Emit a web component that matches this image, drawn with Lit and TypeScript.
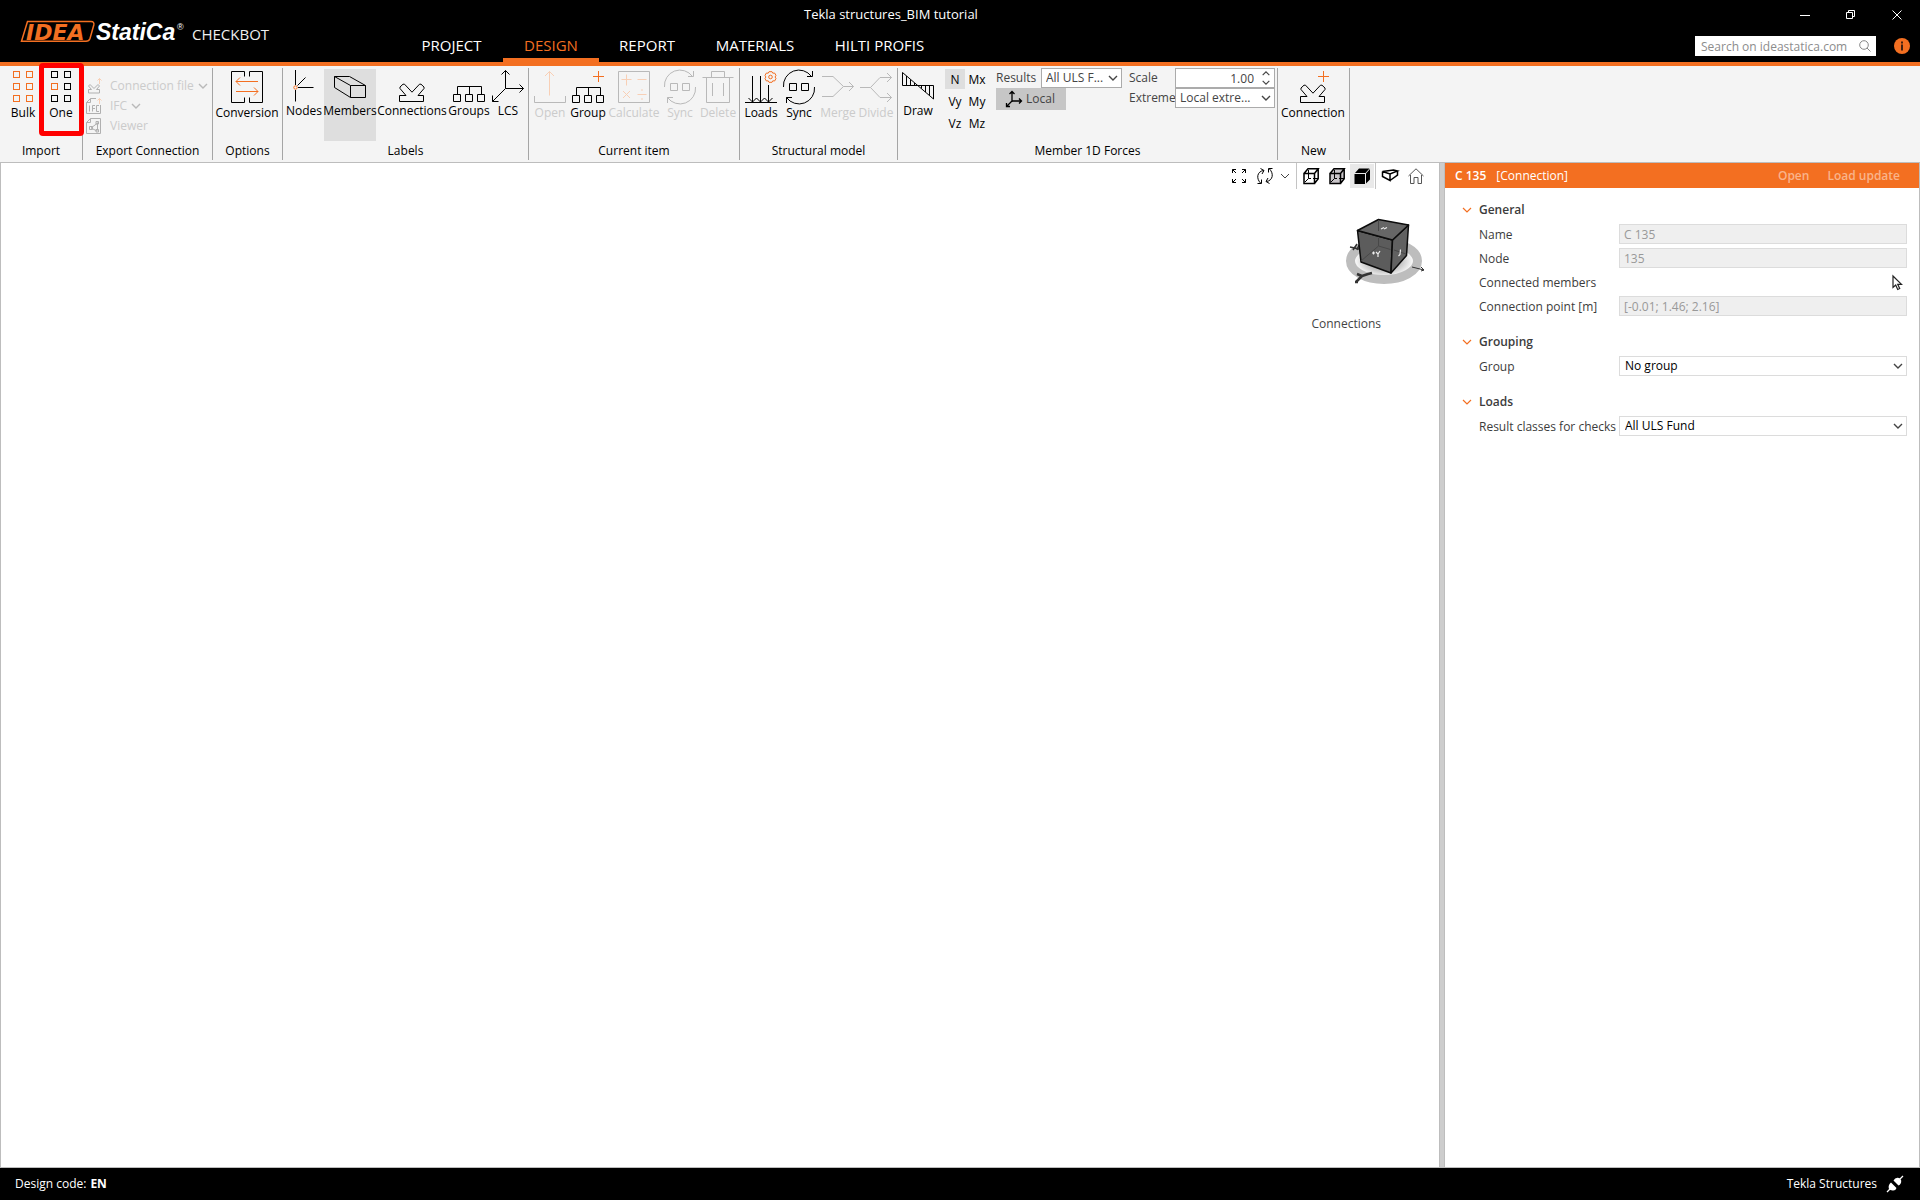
import { LitElement, html, svg, css, nothing, TemplateResult, SVGTemplateResult } from "lit";
import { customElement, state } from "lit/decorators.js";
import { classMap } from "lit/directives/class-map.js";

/* ---------- icons ---------- */

const sq = (x: number, y: number, size: number, cls = "") =>
  svg`<rect class=${cls} x=${x} y=${y} width=${size} height=${size} />`;

const squares = (accent: (i: number) => boolean) =>
  [0, 1, 2, 3, 4, 5].map((i) => sq(6.5 + (i % 2) * 13, 0.5 + Math.floor(i / 2) * 12, 6, accent(i) ? "accent" : ""));

const joint = svg`<path d="M3.500 25.500h6.500L4 18.500V17l3-2.800h1.500l7.500 8 7.500-8H25l3 2.800v1.500l-6 7h5.500v6h-24z" />`;
const tree = svg`<path d="M4.500 24.500v-8h24v8M16.500 16.500v8M.5 24.500h7v7h-7zM12.500 24.500h7v7h-7zM24.500 24.500h7v7h-7z" />`;
const syncArt = svg`
  <path d="M.5 16A15.500 15.500 0 0 1 28.500 5.500M31.500 16A15.500 15.500 0 0 1 3.500 26.500M29.500 0v5.500H24M3.500 32v-5.500H9" />
  <path d="M6.500 12.500h7v7h-7zM18.500 12.500h7v7h-7z" />`;

const ICONS: Record<string, SVGTemplateResult | SVGTemplateResult[]> = {
  bulk: squares(() => true),
  one: squares((i) => i === 2),
  conversion: svg`<path d="M13.500 5.500v-5H.5v31h13v-5M18.500 5.500v-5h13v31h-13v-5" />
    <path class="accent" d="M27 10.500H5M9 6.500l-4 4 4 4M5 20.500h22M23 16.500l4 4-4 4" />`,
  nodes: svg`<path d="M7.500 0v15M7.500 20v11.500M10 17.500h15.500M9.500 15.500l8-8" /><circle class="accent" cx="7.500" cy="17.500" r="1.700" />`,
  members: svg`<path d="M.5 6.500h15l16 9v12h-15L.5 17.500zM.5 6.500l16 9h15M16.500 15.500v12" />`,
  connections: joint,
  groups: tree,
  lcs: svg`<path d="M13.500 18.500V.5M9.500 4.500l4-4 4 4M13.500 18.500h18M27.500 14.500l4 4-4 4M13.500 18.500L.5 31.500M.5 25.500v6h6" />`,
  open: svg`<path d="M.5 25v6.500h31V25" /><path class="accent" d="M15.500 24.500V.5M11 5L15.500.5 20 5" />`,
  group: svg`${tree}<path class="accent" d="M26.500 0v11M21 5.500h11" />`,
  calculate: svg`<path d="M.5.5h31v31H.5z" />
    <path class="accent" d="M8.500 3.500v11M3.500 8.500h10M19.500 8.500h9M5 20l7 7M12 20l-7 7M19.500 23.500h9M24 18v2M24 27v2" />`,
  sync: syncArt,
  delete: svg`<path d="M.5 6.500h31M9.500 6.500v-6h13v6M4.500 6.500v25h23v-25M10.500 12v13M21.500 12v13" />`,
  loads: svg`<path d="M0 31.500h32M7.500 5v26M15.500 5v26M23.500 14v17M3.500 27l4 4 4-4 4 4 4-4 4 4 4-4" />
    <circle class="accent" cx="25.500" cy="6" r="1.800" />
    <path class="accent" d="M24 .7h3l.8 1.500 1.800-.2 1.400 2.400-.9 1.600.9 1.600-1.400 2.400-1.800-.2-.8 1.500h-3l-.8-1.500-1.800.2L20 7.600l.9-1.600-.9-1.600L21.400 2l1.800.2z" />`,
  merge: svg`<path d="M0 5.500h11l10.500 10L11 25.500H0M21.500 15.500h10M27 11l4.500 4.500L27 20" />`,
  divide: svg`<path d="M0 16.500h10.500L20 6.500h11.500M10.500 16.500l9.500 10h11.500M27 2l4.500 4.500L27 11M27 22l4.500 4.500L27 31" />`,
  draw: svg`<path d="M.5 15.500V2.500l31 26.500V15.500zM4.500 6v9.500M8.500 9.500v6M12.500 13v2.500M19.500 15.500v3M23.500 15.500v6.500M27.500 15.500v10" />`,
  connection: svg`${joint}<path class="accent" d="M26.500 0v11M21 5.500h11" />`,
};

const icon = (name: string) => html`<svg class="icon" viewBox="0 0 32 32" aria-hidden="true">${ICONS[name]}</svg>`;

const chevron = (cls = "chev") =>
  html`<svg class=${cls} viewBox="0 0 10 6" aria-hidden="true"><path d="M1 1l4 4 4-4" /></svg>`;

const SMALL: Record<string, SVGTemplateResult> = {
  file: svg`<path d="M2.500 11.500h3l-3-3.500 1.500-1.500 4 4 4-4 1.500 1.500-3 3.500h3v3.500h-11z" /><path class="accent" d="M13.500 6V.5M11.500 2.500l2-2 2 2" />`,
  ifc: svg`<path d="M14.500 7v8.500H.5V4.500L4.500.5H10M.5 4.500h4v-4" /><path d="M3.500 7.500v6M6.500 13.500v-6H9M6.500 10.500H9M13 7.500h-2.500v6H13" /><path class="accent" d="M13.500 6V.5M11.500 2.500l2-2 2 2" />`,
  viewer: svg`<path d="M.5 4.500L4.500.5h10v15H.5zM.5 4.500h4v-4M11.500 4.500v8M5 10l6-4.500M5 10l6 3" /><path d="M3.500 8.500h3v3h-3zM10 3.500h2.500V6H10zM10 11.500h2.500V14H10z" />`,
};

const VIEW: Record<string, SVGTemplateResult> = {
  fit: svg`<path d="M1.500 5V1.500H5M1.500 1.500L5 5M11 1.500h3.500V5M14.500 1.500L11 5M1.500 11v3.500H5M1.500 14.500L5 11M11 14.500h3.500V11M14.500 14.500L11 11" />`,
  orbit: svg`<path d="M3.500 15C-1 10.500 0 3.500 6.500 2.500M3.500.5l3.500 2L5 6M.5 15.500h4v-4M12.500 1c4.500 4.500 3.500 11.500-3 12.500M12.500 15.500L9 13.500 11 10M15.500.5h-4v4" />`,
  wire: svg`<path class="heavy" d="M1 5.500h10.500v10H1zM1 5.500L5 .8h10.200L11.500 5.500M15.200.8v10l-3.700 4.700" /><path d="M5.500 2v8.500H8M10 10.500h5M5.500 10.500L2 14" />`,
  shaded: svg`<path class="shade" d="M1 5.500L5 .8h10.200v10l-3.700 4.700H1z" /><path class="heavy" d="M1 5.500h10.500v10H1zM1 5.500L5 .8h10.200L11.500 5.500M15.200.8v10l-3.700 4.700" /><path d="M5.500 2v8.500H8M10 10.500h5M5.500 10.500L2 14" />`,
  solid: svg`<path class="fill" d="M.5 6h10.500v10H.5zM1 5L5 .5h10.500L11.500 5zM12 5.500l4-4.500v10.500L12 15.500z" />`,
  beam: svg`<path class="heavy" d="M.5 3.500l11-1.500 4 1L8 6zM.5 3.500V8.500L8 12.500V6M15.500 3v4L8 12.500" />`,
  home: svg`<path class="thin" d="M.5 8L8 .8 15.500 8M2.500 7v8.500H6v-6h4v6h3.500V7" />`,
};

/* ---------- data ---------- */

interface Tool { id: string; label: string; disabled?: boolean; active?: boolean; marked?: boolean }
interface Group { id: string; caption: string; tight?: boolean; tools: Tool[] }

const GROUPS: Record<string, Group> = {
  import: { id: "import", caption: "Import", tools: [{ id: "bulk", label: "Bulk" }, { id: "one", label: "One", marked: true }] },
  options: { id: "options", caption: "Options", tools: [{ id: "conversion", label: "Conversion" }] },
  labels: {
    id: "labels", caption: "Labels", tight: true,
    tools: [
      { id: "nodes", label: "Nodes" },
      { id: "members", label: "Members", active: true },
      { id: "connections", label: "Connections" },
      { id: "groups", label: "Groups" },
      { id: "lcs", label: "LCS" },
    ],
  },
  current: {
    id: "current", caption: "Current item",
    tools: [
      { id: "open", label: "Open", disabled: true },
      { id: "group", label: "Group" },
      { id: "calculate", label: "Calculate", disabled: true },
      { id: "sync", label: "Sync", disabled: true },
      { id: "delete", label: "Delete", disabled: true },
    ],
  },
  structural: {
    id: "structural", caption: "Structural model",
    tools: [
      { id: "loads", label: "Loads" },
      { id: "sync", label: "Sync" },
      { id: "merge", label: "Merge", disabled: true },
      { id: "divide", label: "Divide", disabled: true },
    ],
  },
  create: { id: "create", caption: "New", tools: [{ id: "connection", label: "Connection" }] },
};

const TABS = ["PROJECT", "DESIGN", "REPORT", "MATERIALS", "HILTI PROFIS"];
const FORCES = ["N", "Mx", "Vy", "My", "Vz", "Mz"];

/* ---------- shared styles ---------- */

const base = css`
  * { box-sizing: border-box; }
  button, input, select { font: inherit; color: inherit; margin: 0; padding: 0; border: 0; border-radius: 0; background: none; outline: 0; }
  button { white-space: nowrap; }
  svg { display: block; fill: none; stroke: currentColor; flex: none; overflow: visible; }
  .accent { stroke: #f36f21; }
  .chev { width: 10px; height: 6px; stroke: #444; stroke-width: 1.400; }
  .drop { display: grid; align-items: center; }
  .drop select { grid-area: 1 / 1; appearance: none; width: 100%; height: 20px; border: 1px solid #ababab; background: #fff; padding: 0 14px 0 4px; }
  .drop .chev { grid-area: 1 / 1; justify-self: end; margin-right: 4px; pointer-events: none; }
`;

/* ---------- header ---------- */

@customElement("cb-header")
class CbHeader extends LitElement {
  static styles = [base, css`
    :host { display: grid; grid-template-columns: 400px 1fr auto; grid-template-rows: 30px 32px; background: #000; color: #fff; border-bottom: 4px solid #f36f21; }
    .brand { grid-row: 1 / 3; display: flex; padding: 18px 0 0 20px; gap: 7px; }
    .logo { width: 165px; height: 26px; }
    .idea { font: italic 700 22px "DejaVu Sans", sans-serif; fill: #f36f21; stroke: none; }
    .statica { font: italic 700 23px "Liberation Sans", sans-serif; fill: #fff; stroke: none; }
    .reg { font: 9px "Liberation Sans", sans-serif; fill: #fff; stroke: none; }
    .frame { stroke: #f36f21; stroke-width: 1.500; }
    .product { font-size: 15px; line-height: 20px; padding-top: 6px; color: #eee; }
    .title { font-size: 13px; line-height: 28px; padding-left: 404px; }
    .window { display: flex; justify-content: flex-end; align-items: center; gap: 36px; padding: 0 18px 0 0; }
    .window svg { width: 10px; height: 10px; }
    nav { display: grid; grid-template-columns: 103px 96px 96px 120px 129px; }
    .tab { font-size: 15px; line-height: 30px; text-align: center; height: 32px; color: #fff; text-decoration: none; white-space: nowrap; }
    .tab.on { color: #f36f21; border-bottom: 4px solid #f36f21; }
    .find { display: flex; align-items: flex-start; gap: 18px; padding: 6px 10px 0 0; }
    .search { display: flex; align-items: center; width: 181px; height: 20px; background: #fff; color: #888; padding: 0 5px 0 6px; }
    .search input { flex: 1; min-width: 0; height: 20px; }
    .search input::placeholder { color: #8c8c8c; opacity: 1; }
    .search svg { width: 12px; height: 12px; }
    .info { width: 16px; height: 16px; margin-top: 2px; }
    .disc { fill: #f36f21; stroke: none; }
    .mark { stroke: #402010; stroke-width: 2; }
  `];

  @state() tab = "DESIGN";

  render() {
    return html`
      <div class="brand">
        <svg class="logo" viewBox="0 0 165 26" role="img" aria-label="IDEA StatiCa">
          <path class="frame" d="M7.500 3.500H71Q74.500 3.500 73.800 7L70 20.500Q69 23.200 66 23.200H1.500z" />
          <text class="idea" x="6" y="21.500">IDEA</text>
          <text class="statica" x="76" y="22">StatiCa</text>
          <text class="reg" x="157" y="12">®</text>
        </svg>
        <span class="product">CHECKBOT</span>
      </div>
      <div class="title">Tekla structures_BIM tutorial</div>
      <div class="window">
        <button aria-label="Minimize"><svg viewBox="0 0 10 10"><path d="M0 5.500h10" /></svg></button>
        <button aria-label="Restore"><svg viewBox="0 0 10 10"><path d="M.5 2.500h6v6h-6zM2.500 2.500v-2h6v6h-2" /></svg></button>
        <button aria-label="Close"><svg viewBox="0 0 10 10"><path d="M.5.5l9 9M9.500.5l-9 9" /></svg></button>
      </div>
      <nav>
        ${TABS.map((t) => html`<a href="#" class=${classMap({ tab: true, on: t === this.tab })}
          @click=${(e: Event) => { e.preventDefault(); this.tab = t; }}>${t}</a>`)}
      </nav>
      <div class="find">
        <label class="search">
          <input type="text" aria-label="Search" placeholder="Search on ideastatica.com" />
          <svg viewBox="0 0 12 12"><circle cx="5" cy="5" r="4.300" /><path d="M8 8l3.500 3.500" /></svg>
        </label>
        <button aria-label="Information"><svg class="info" viewBox="0 0 16 16"><circle class="disc" cx="8" cy="8" r="8" /><path class="mark" d="M8 3.500v2M8 6.500v6" /></svg></button>
      </div>`;
  }
}

/* ---------- ribbon ---------- */

@customElement("cb-ribbon")
class CbRibbon extends LitElement {
  static styles = [base, css`
    :host { display: flex; background: #f4f4f4; padding: 2px 0; border-bottom: 1px solid #bdbdbd; color: #000; }
    .group { display: flex; flex-direction: column; border-right: 1px solid #a5a5a5; flex: none; }
    .tools { display: grid; height: 74px; align-items: start; }
    .caption { text-align: center; line-height: 18px; }
    .import .tools { grid-template-columns: 38px 38px; padding: 0 2px 0 4px; }
    .options .tools { grid-template-columns: 68px; padding-right: 1px; }
    .labels .tools { grid-template-columns: 40px 52px 72px 42px 36px; padding: 0 2px 0 1px; }
    .current .tools { grid-template-columns: 36px 40px 52px 40px 36px; padding: 0 3px; }
    .structural .tools { grid-template-columns: 36px 40px 38px 38px; padding: 0 2px 0 3px; }
    .create .tools { grid-template-columns: 70px; padding-right: 1px; }
    .tool { position: relative; display: flex; flex-direction: column; align-items: center; gap: 2px; height: 72px; margin-top: 1px; padding-top: 2px; line-height: 16px; }
    .tight .tool { padding-top: 1px; gap: 1px; }
    .tool .text { display: flex; justify-content: center; width: 0; }
    .tool.on { background: #dedede; }
    .tool:disabled { color: #b9b9b9; }
    .tool:disabled .text { color: #cbcbcb; }
    .tool:disabled .accent { stroke: #f8cfb5; }
    .icon { width: 32px; height: 32px; }
    .marker { position: absolute; inset: -6px -4px -2px -3px; height: 73px; border: 5px solid #f00; border-radius: 4px; pointer-events: none; z-index: 2; }
    .export .tools { grid-template-rows: 20px 20px 20px; padding: 8px 7px 0 3px; }
    .line { display: flex; align-items: center; gap: 8px; height: 20px; color: #cbcbcb; width: 119px; }
    .line svg:not(.chev) { width: 16px; height: 16px; stroke: #b0b0b0; }
    .line svg .accent { stroke: #f8cfb5; }
    .line .chev { stroke: #b9b9b9; margin-left: -4px; }
    .forces .tools { display: flex; padding-right: 2px; }
    .draw { width: 40px; }
    .comp { display: grid; grid-template-columns: 20px 20px; grid-auto-rows: 20px; gap: 2px; padding: 1px 9px 0 7px; }
    .comp button { padding-top: 1px; }
    .comp button.on { background: #dedede; }
    .fields { display: grid; align-items: center; color: #444; grid-auto-rows: 20px; }
    .results { grid-template-columns: 45px 81px; margin-right: 7px; }
    .scale { grid-template-columns: 46px 100px; }
    .local { display: flex; align-items: center; gap: 4px; width: 70px; height: 22px; background: #c6c6c6; padding-left: 10px; }
    .local svg { width: 16px; height: 16px; color: #000; }
    .span { grid-column: 1 / 3; align-self: start; }
    .spin { display: flex; align-items: center; height: 20px; background: #fff; border: 1px solid #ababab; padding-right: 3px; }
    .spin input { flex: 1; min-width: 0; text-align: right; padding-right: 7px; height: 18px; }
    .steps { display: flex; flex-direction: column; gap: 4px; }
    .steps .chev, .steps button { display: block; width: 10px; height: 5px; }
    .up { transform: rotate(180deg); }
  `];

  @state() force = "N";

  private tool(t: Tool) {
    return html`<button class=${classMap({ tool: true, on: !!t.active })} ?disabled=${!!t.disabled}>
      ${icon(t.id)}<span class="text">${t.label}</span>${t.marked ? html`<span class="marker"></span>` : nothing}
    </button>`;
  }

  private group(id: string, caption: string, body: TemplateResult | TemplateResult[], tight = false) {
    return html`<section class=${classMap({ group: true, [id]: true, tight })}>
      <div class="tools">${body}</div><div class="caption">${caption}</div></section>`;
  }

  private plain(g: Group) {
    return this.group(g.id, g.caption, g.tools.map((t) => this.tool(t)), !!g.tight);
  }

  private line(id: string, label: string, menu: boolean) {
    return html`<button class="line" disabled>
      <svg viewBox="0 0 16 16" aria-hidden="true">${SMALL[id]}</svg><span>${label}</span>${menu ? chevron() : nothing}</button>`;
  }

  private forces() {
    return html`
      <button class="tool draw">${icon("draw")}<span class="text">Draw</span></button>
      <div class="comp">
        ${FORCES.map((f) => html`<button class=${classMap({ on: f === this.force })} @click=${() => (this.force = f)}>${f}</button>`)}
      </div>
      <div class="fields results">
        <label for="results">Results</label>
        <div class="drop"><select id="results"><option>All ULS F...</option></select>${chevron()}</div>
        <div class="span"><button class="local">
          <svg viewBox="0 0 16 16"><path stroke-width="1.300" d="M6 10V.5M3.500 3L6 .5 8.500 3M6 10h9.500M13 7.500l2.500 2.500-2.500 2.500M6 10L.5 15.500M.5 12v3.500H4" /></svg>Local</button></div>
      </div>
      <div class="fields scale">
        <label for="scale">Scale</label>
        <div class="spin"><input id="scale" type="text" value="1.00" />
          <span class="steps"><button aria-label="Increase">${chevron("chev up")}</button><button aria-label="Decrease">${chevron()}</button></span></div>
        <label for="extreme">Extreme</label>
        <div class="drop"><select id="extreme"><option>Local extre...</option></select>${chevron()}</div>
      </div>`;
  }

  render() {
    return html`
      ${this.plain(GROUPS.import)}
      ${this.group("export", "Export Connection", [this.line("file", "Connection file", true), this.line("ifc", "IFC", true), this.line("viewer", "Viewer", false)])}
      ${this.plain(GROUPS.options)}
      ${this.plain(GROUPS.labels)}
      ${this.plain(GROUPS.current)}
      ${this.plain(GROUPS.structural)}
      ${this.group("forces", "Member 1D Forces", this.forces(), true)}
      ${this.plain(GROUPS.create)}`;
  }
}

/* ---------- 3D view ---------- */

@customElement("cb-viewport")
class CbViewport extends LitElement {
  static styles = [base, css`
    :host { display: flex; flex-direction: column; align-items: flex-end; background: #fff; border-left: 1px solid #bdbdbd; color: #000; }
    .bar { display: flex; height: 26px; padding-right: 10px; }
    .bar button { display: grid; place-items: center; width: 26px; height: 24px; margin-top: 1px; }
    .bar svg:not(.chev) { width: 16px; height: 16px; }
    .bar .menu { width: 14px; }
    .bar .menu .chev { stroke-width: 1; }
    .bar .on { background: #e9e9e9; width: 24px; }
    .rule { width: 1px; background: #c4c4c4; margin: 0 1px 0 4px; }
    .rule.near { margin: 0 1px; }
    .heavy { stroke-width: 1.500; }
    .thin { stroke: #555; }
    .shade { fill: #c9c5c9; stroke: none; }
    .fill { fill: #000; stroke: none; }
    .cube { width: 80px; height: 70px; margin: 27px 14px 0 0; }
    .ring { stroke: #bdbdbd; stroke-width: 9; }
    .glow { fill: url(#glow); stroke: none; }
    .face { stroke: #0c0c0c; stroke-width: 1.500; stroke-linejoin: round; }
    .top { fill: #666; } .front { fill: #5c5c5c; } .side { fill: #616161; }
    .hidden { stroke: #484848; }
    .axis { stroke: #333; stroke-width: 2.500; }
    .axis.fine { stroke-width: 1; }
    .axis.mid { stroke-width: 1.500; }
    .glyph { stroke: #eee; stroke-width: 1.200; }
    .tag { margin: 30px 58px 0 0; line-height: 16px; color: #444; }
  `];

  private btn(id: string, label: string, cls = "") {
    return html`<button class=${cls} aria-label=${label}><svg viewBox="0 0 16 16">${VIEW[id]}</svg></button>`;
  }

  render() {
    return html`
      <div class="bar">
        ${this.btn("fit", "Zoom to fit")}${this.btn("orbit", "Rotate")}
        <button class="menu" aria-label="Rotation options">${chevron()}</button>
        <span class="rule"></span>
        ${this.btn("wire", "Wireframe")}${this.btn("shaded", "Transparent")}${this.btn("solid", "Solid", "on")}
        <span class="rule near"></span>
        ${this.btn("beam", "Perspective")}${this.btn("home", "Home view")}
      </div>
      <svg class="cube" viewBox="0 0 80 70" aria-label="View cube">
        <defs><radialGradient id="glow"><stop offset="0.5" stop-color="#bbb" /><stop offset="1" stop-color="#fff" /></radialGradient></defs>
        <ellipse class="glow" cx="39" cy="45" rx="30" ry="17" />
        <ellipse class="ring" cx="39" cy="45" rx="33.500" ry="18.500" />
        <path class="axis mid" d="M5 31l9 2M8 34l4-6M12 34l2-5" />
        <path class="face front" d="M12.500 14.500L47.500 24 46 57 16 46z" />
        <path class="face side" d="M47.500 24L63.500 9 61.500 39.500 46 57z" />
        <path class="face top" d="M12.500 14.500L33.500 3.500 63.500 9 47.500 24z" />
        <path class="hidden" d="M33.500 4v11M33.500 22v8L16 45M33.500 30l12 3.500M49 34l12 4" />
        <path class="glyph" d="M36 13l3-1.500M39 13l3-1.500M27 37h3M28.500 35.500v3M31 36l2 2v3M35 35l-2 3M53.500 40l1.500-1.500.5-5" />
        <path class="axis" d="M11 66l6-6M12 58l5 2M17 60l6-2 4-1M10 66h3" />
        <path class="axis fine" d="M67 51l12 3M76 51l3 3-3 1" />
      </svg>
      <div class="tag">Connections</div>`;
  }
}

/* ---------- property panel ---------- */

interface Row { id: string; label: string; value?: string; kind: "text" | "select" | "pick" }
const SECTIONS: { title: string; rows: Row[] }[] = [
  {
    title: "General",
    rows: [
      { id: "name", label: "Name", value: "C 135", kind: "text" },
      { id: "node", label: "Node", value: "135", kind: "text" },
      { id: "members", label: "Connected members", kind: "pick" },
      { id: "point", label: "Connection point [m]", value: "[-0.01; 1.46; 2.16]", kind: "text" },
    ],
  },
  { title: "Grouping", rows: [{ id: "group", label: "Group", value: "No group", kind: "select" }] },
  { title: "Loads", rows: [{ id: "classes", label: "Result classes for checks", value: "All ULS Fund", kind: "select" }] },
];

@customElement("cb-properties")
class CbProperties extends LitElement {
  static styles = [base, css`
    :host { display: block; background: #fff; border-right: 1px solid #bdbdbd; color: #3c3c3c; }
    .head { display: flex; align-items: center; height: 25px; background: #f36f21; color: #fff; padding: 0 19px 0 10px; }
    .kind { margin-left: 10px; flex: 1; }
    .head button { font-weight: 600; color: #f9b48b; margin-left: 18px; }
    .name { font-weight: 600; }
    .body { display: flex; flex-direction: column; gap: 12px; padding: 10px 12px 0 17px; }
    .title { display: flex; align-items: center; gap: 7px; height: 24px; font-weight: 600; }
    .title .chev { stroke: #f36f21; stroke-width: 1.200; }
    .row { display: grid; grid-template-columns: 140px 1fr; align-items: center; height: 24px; padding-left: 17px; }
    .row label { padding-top: 2px; white-space: nowrap; }
    .field { width: 100%; height: 20px; border: 1px solid #dcdcdc; background: #efefef; color: #999; padding: 0 4px; }
    .drop select { border-color: #dcdcdc; color: #000; padding-left: 5px; }
    .pick { justify-self: end; margin-right: 4px; }
    .pick svg { width: 11px; height: 15px; color: #222; }
  `];

  private control(r: Row) {
    if (r.kind === "text") return html`<input class="field" id=${r.id} type="text" disabled .value=${r.value ?? ""} />`;
    if (r.kind === "select") return html`<div class="drop"><select id=${r.id}><option>${r.value}</option></select>${chevron()}</div>`;
    return html`<button class="pick" id=${r.id} aria-label="Select members"><svg viewBox="0 0 11 15"><path stroke-width="1.200" d="M1 1v11.500l2.700-2.500 2 4.500 2-1-2-4.200H9.500z" /></svg></button>`;
  }

  render() {
    return html`
      <div class="head"><span class="name">C 135</span><span class="kind">[Connection]</span><button>Open</button><button>Load update</button></div>
      <div class="body">
        ${SECTIONS.map((s) => html`<section>
          <div class="title">${chevron()}${s.title}</div>
          ${s.rows.map((r) => html`<div class="row"><label for=${r.id}>${r.label}</label>${this.control(r)}</div>`)}
        </section>`)}
      </div>`;
  }
}

/* ---------- application ---------- */

@customElement("app-root")
class AppRoot extends LitElement {
  static styles = [base, css`
    :host { display: flex; flex-direction: column; min-height: 100vh; background: #fff; font: 12px/16px "Open Sans", "Noto Sans", sans-serif; }
    .main { flex: 1; display: grid; grid-template-columns: 1fr 6px 475px; }
    .split { background: #cdcdcd; border: solid #bdbdbd; border-width: 0 1px; }
    .status { display: flex; align-items: center; height: 33px; background: #000; color: #fff; border-top: 1px solid #bdbdbd; padding: 0 17px 0 15px; }
    .code { font-weight: 700; margin-left: 4px; flex: 1; }
    .plug { width: 16px; height: 16px; margin-left: 10px; }
    .solid { fill: #fff; stroke: none; }
  `];

  render() {
    return html`
      <cb-header></cb-header>
      <cb-ribbon></cb-ribbon>
      <div class="main">
        <cb-viewport></cb-viewport>
        <div class="split"></div>
        <cb-properties></cb-properties>
      </div>
      <footer class="status">
        <span>Design code:</span><span class="code">EN</span><span>Tekla Structures</span>
        <svg class="plug" viewBox="0 0 16 16" aria-hidden="true">
          <path class="solid" d="M4 6.500l5.500 5.500Q8.500 15 5.500 14.500 3 14.500 1.800 12.500 1 9 4 6.500z" />
          <path class="solid" d="M6.500 4.500Q8 1.500 11 1.800 13.500 2 14.200 4.500 14.500 8 11.500 9.500z" />
          <path stroke-width="1.300" d="M0 16l3-3M12.500 3.500L16 0" />
        </svg>
      </footer>`;
  }
}
